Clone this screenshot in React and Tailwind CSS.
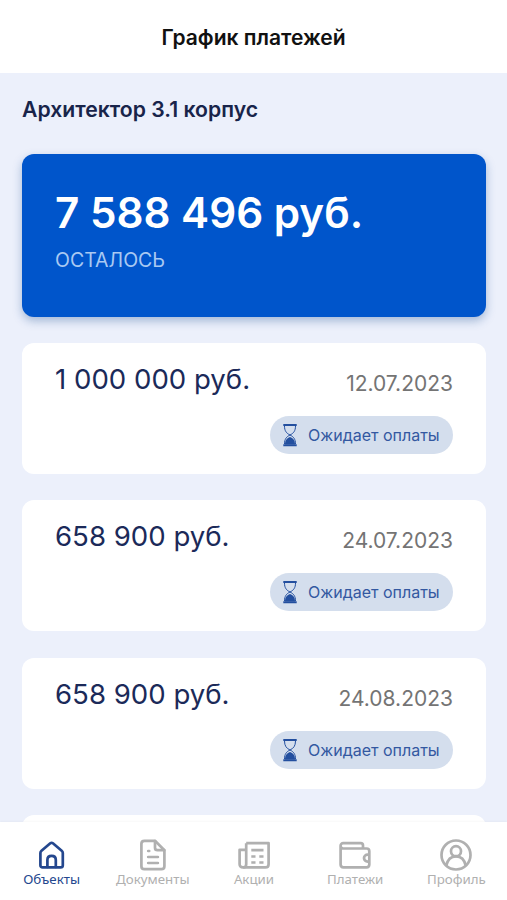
import React, { useState } from 'react';

const payments = [
  { amount: '1 000 000 руб.', date: '12.07.2023' },
  { amount: '658 900 руб.', date: '24.07.2023' },
  { amount: '658 900 руб.', date: '24.08.2023' },
];

const HomeIcon = () => (
  <svg viewBox="0 0 32 32" className="h-8 w-8" fill="none" stroke="currentColor" strokeWidth="2.7" strokeLinejoin="round" strokeLinecap="round">
    <path d="M4.4 14c0-1 .4-1.700 1.100-2.300L14.300 4.300c.9-.7 1.700-.7 2.600 0l8.800 7.400c.7.600 1.100 1.300 1.100 2.300v12.200c0 1.400-.8 2.200-2.200 2.200H6.600c-1.400 0-2.200-.8-2.200-2.200z" />
    <path d="M11.400 28V21c0-2.600 1.600-4.100 4.200-4.100s4.200 1.500 4.200 4.100v7" />
  </svg>
);

const DocumentIcon = () => (
  <svg viewBox="0 0 32 32" className="h-8 w-8" fill="none" stroke="currentColor" strokeWidth="2.7" strokeLinejoin="round" strokeLinecap="round">
    <path d="M7.4 1.8H18l9.400 9.400v16c0 1.900-1.100 3-3 3H7.400c-1.900 0-3-1.100-3-3V4.800c0-1.900 1.100-3 3-3z" />
    <path d="M18 2v6.700c0 1.500.9 2.500 2.500 2.500h6.700M11.200 12h1M11.200 18h9.700M11.200 24h9.700" />
  </svg>
);

const NewsIcon = () => (
  <svg viewBox="0 0 32 32" className="h-8 w-8" fill="none" stroke="currentColor" strokeWidth="2.7" strokeLinejoin="round">
    <path d="M8.2 4.200h22.400v21c0 2-1.200 3.200-3.200 3.200H4.800c-1.900 0-3.200-1.300-3.200-3.200V10.800h6.600" />
    <path d="M8.200 4.200v21c0 1.900-1.100 3.200-3 3.200M13.300 11.200h12.200M13.300 17.500h4.200M21.300 17.500h4.200M13.300 23.500h4.200M21.300 23.500h4.200" />
  </svg>
);

const WalletIcon = () => (
  <svg viewBox="0 0 32 32" className="h-8 w-8" fill="none" stroke="currentColor" strokeWidth="2.7" strokeLinejoin="round">
    <path d="M24 9.500V6.400c0-1.500-.8-2.300-2.300-2.300H4.200C2.700 4.100 1.600 5.200 1.600 6.700v18.800c0 1.800 1 2.800 2.800 2.800h23.200c1.700 0 2.700-1 2.700-2.800V12.200c0-1.700-1-2.700-2.700-2.700H4.200c-1.500 0-2.600-1-2.600-2.500" />
    <path d="M30 15.600h-1.400c-2 0-3.600 1.500-3.600 3.500s1.600 3.500 3.600 3.500H30" />
  </svg>
);

const ProfileIcon = () => (
  <svg viewBox="0 0 32 32" className="h-8 w-8" fill="none" stroke="currentColor" strokeWidth="2.7">
    <circle cx="16" cy="16" r="14.5" />
    <circle cx="16" cy="12.2" r="5" />
    <path d="M6.300 26.500c1.200-5.600 4.800-9.200 9.700-9.200s8.500 3.600 9.700 9.200" />
  </svg>
);

const HourglassIcon = () => (
  <svg viewBox="0 0 14 24" className="h-6 w-3.5 text-[#234f9f]" fill="none" stroke="currentColor">
    <path d="M.3 2h13.4M.3 22.200h13.400" strokeWidth="2" />
    <path d="M1.500 3c0 5 2 7.300 5.500 9 3.500-1.700 5.500-4 5.500-9M1.500 21c0-5 2-7.300 5.500-9 3.500 1.700 5.500 4 5.500 9" strokeWidth="1" />
    <path d="M2 21.500c0-4.500 2-6.500 5-7.500 3 1 5 3 5 7.500z" fill="currentColor" stroke="none" />
  </svg>
);

const tabs = [
  { id: 'objects', label: 'Объекты', Icon: HomeIcon },
  { id: 'documents', label: 'Документы', Icon: DocumentIcon },
  { id: 'offers', label: 'Акции', Icon: NewsIcon },
  { id: 'payments', label: 'Платежи', Icon: WalletIcon },
  { id: 'profile', label: 'Профиль', Icon: ProfileIcon },
];

const PaymentCard = ({ amount, date }) => (
  <div className="h-[131px] shrink-0 rounded-xl bg-white px-[33px] pt-5">
    <div className="flex h-9 items-start justify-between">
      <span className="text-[27.6px] leading-[33px] text-[#1b2a59]">{amount}</span>
      <span className="pt-[5px] text-[21px] leading-8 text-[#747474]">{date}</span>
    </div>
    <div className="mt-[17px] flex justify-end">
      <div className="flex h-[38px] w-[183px] items-center gap-[11px] rounded-full bg-[#d4deed] pl-[13px]">
        <HourglassIcon />
        <span className="whitespace-nowrap text-[16px] text-[#3358a1]">Ожидает оплаты</span>
      </div>
    </div>
  </div>
);

const App = () => {
  const [activeTab, setActiveTab] = useState('objects');

  return (
    <div className="flex h-screen flex-col overflow-hidden bg-[#ecf0fb] font-['Inter',sans-serif]">
      <header className="flex h-[73px] shrink-0 items-center justify-center bg-white pt-0.5">
        <h1 className="text-[21px] font-semibold text-[#111111]">График платежей</h1>
      </header>

      <main className="flex min-h-0 flex-1 flex-col overflow-hidden pl-[22px] pr-[21px]">
        <h2 className="mt-5 shrink-0 text-[21.2px] font-semibold leading-8 text-[#18244a]">
          Архитектор 3.1 корпус
        </h2>

        <div className="mt-[29px] h-[163px] shrink-0 rounded-xl bg-[#0055cb] pl-[33px] pt-[34px] shadow-[0_4px_10px_rgba(30,80,150,0.35)]">
          <div className="text-[42.2px] font-semibold leading-[50px] text-white">7 588 496 руб.</div>
          <div className="mt-[7px] text-[19.5px] leading-[30px] text-[#a9c9f2]">ОСТАЛОСЬ</div>
        </div>

        <div className="mt-[26px] flex flex-col gap-[26.4px]">
          {payments.map((payment) => (
            <PaymentCard key={payment.date} {...payment} />
          ))}
          <div className="h-5 shrink-0 rounded-t-xl bg-white" />
        </div>
      </main>

      <nav className="z-10 grid h-[78px] shrink-0 grid-cols-5 bg-white pl-px shadow-[0_-1px_2px_rgba(0,0,0,0.03)]">
        {tabs.map(({ id, label, Icon }) => (
          <button
            key={id}
            className={`
              flex flex-col items-center pt-[17px]
              ${activeTab === id ? 'text-[#24478e]' : 'text-[#b0b0b0]'}
            `}
            onClick={() => setActiveTab(id)}
          >
            <Icon />
            <span className="font-['Noto_Sans',sans-serif] text-[13.3px] leading-4">{label}</span>
          </button>
        ))}
      </nav>
    </div>
  );
};

export default App;
